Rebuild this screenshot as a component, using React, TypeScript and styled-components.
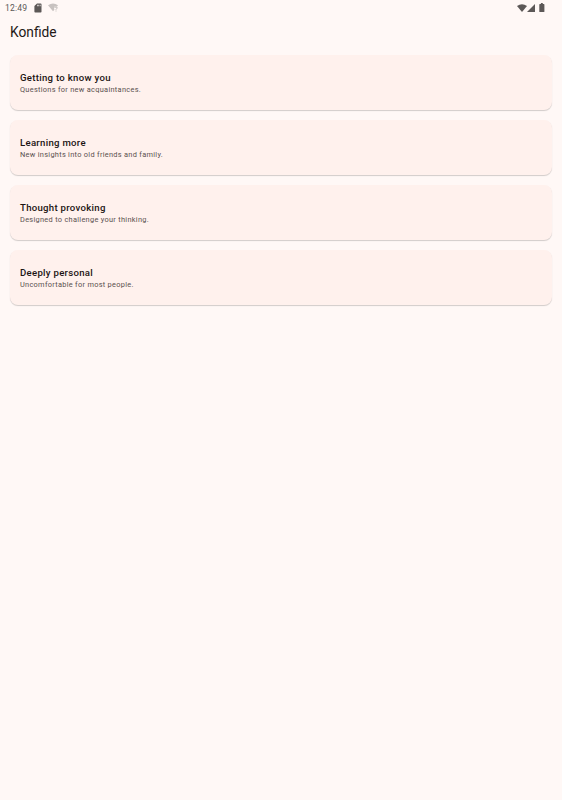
import React from 'react';
import styled, { createGlobalStyle } from 'styled-components';

const Global = createGlobalStyle`
  * { box-sizing: border-box; }
  body { margin: 0; background: #fff8f6; font-family: Roboto, sans-serif; }
`;
const Screen = styled.div`
  height: 800px;
  display: flex;
  flex-direction: column;
  background: #fff8f6;
`;
const StatusBar = styled.header`
  height: 15px;
  padding: 0 17px 0 5px;
  display: flex;
  align-items: center;
  justify-content: space-between;
  color: #5c5857;
`;
const Group = styled.div`
  display: flex;
  align-items: center;
`;
const Clock = styled.span`
  font-size: 8.6px;
  line-height: 15px;
  letter-spacing: 0.15px;
  padding-top: 1px;
  width: 29px;
`;
const Icon = styled.svg<{ $gap?: number }>`
  display: block;
  flex: none;
  margin-left: ${({ $gap = 0 }) => $gap}px;
`;
const Title = styled.h1`
  margin: 0;
  padding: 0 10px;
  font-size: 13.75px;
  font-weight: 400;
  line-height: 35px;
  height: 40px;
  color: #231917;
`;
const List = styled.main`
  display: flex;
  flex-direction: column;
  gap: 10px;
  padding: 0 10px;
`;
const Card = styled.section`
  height: 55px;
  padding: 16px 10px 0;
  border-radius: 8px;
  background: #fff1ed;
  box-shadow: 0 1px 1px rgba(0, 0, 0, 0.18);
`;
const Heading = styled.h2`
  margin: 0;
  font-size: 9.6px;
  font-weight: 500;
  line-height: 13px;
  letter-spacing: 0.29px;
  color: #1c1413;
`;
const Description = styled.p`
  margin: 0;
  font-size: 7.4px;
  line-height: 12px;
  letter-spacing: 0.29px;
  color: #5a504d;
`;

const topics = [
  ['Getting to know you', 'Questions for new acquaintances.'],
  ['Learning more', 'New insights into old friends and family.'],
  ['Thought provoking', 'Designed to challenge your thinking.'],
  ['Deeply personal', 'Uncomfortable for most people.'],
];

const SdCard = () => (
  <Icon width="8" height="10" viewBox="0 0 8 10" fill="currentColor">
    <path
      fillRule="evenodd"
      d="M3 .5h3.7q.8 0 .8.8v7.4q0 .8-.8.8H1.2q-.8 0-.8-.8V3.1zM3 1.8v1.5h.7V1.8zm1.4 0v1.5h.7V1.8zm1.4 0v1.5h.7V1.8z"
    />
  </Icon>
);

const WifiUnknown = () => (
  <Icon $gap={6} width="10" height="9" viewBox="0 0 10 9">
    <path fill="#c8c2c0" d="M0 2.3Q5-1.3 10 2.3L9.1 3.4Q6.1 2.6 6 5.2L6.4 6.7 5 8.3z" />
    <path
      fill="none"
      stroke="#aaa4a2"
      strokeWidth=".8"
      d="M6.9 4.8q.1-1 1.1-1t1.1 1q0 .6-.6 1-.5.4-.5 1M8 7.6v.8"
    />
  </Icon>
);

const Wifi = () => (
  <Icon width="10" height="8" viewBox="0 0 10 8" fill="currentColor">
    <path d="M0 2Q5-1.7 10 2L5 8z" />
  </Icon>
);

const Signal = () => (
  <Icon width="8" height="8" viewBox="0 0 8 8" fill="currentColor">
    <path d="M0 8L8 0v8z" />
  </Icon>
);

const Battery = () => (
  <Icon $gap={4} width="6" height="9" viewBox="0 0 6 9" fill="currentColor">
    <path d="M1.9 0h1.9v.9h1q.6 0 .6.6v6.9q0 .6-.6.6H.9q-.6 0-.6-.6V1.5q0-.6.6-.6h1z" />
  </Icon>
);

export default function App() {
  return (
    <Screen>
      <Global />
      <StatusBar>
        <Group>
          <Clock>12:49</Clock>
          <SdCard />
          <WifiUnknown />
        </Group>
        <Group>
          <Wifi />
          <Signal />
          <Battery />
        </Group>
      </StatusBar>
      <Title>Konfide</Title>
      <List>
        {topics.map(([name, text]) => (
          <Card key={name}>
            <Heading>{name}</Heading>
            <Description>{text}</Description>
          </Card>
        ))}
      </List>
    </Screen>
  );
}
